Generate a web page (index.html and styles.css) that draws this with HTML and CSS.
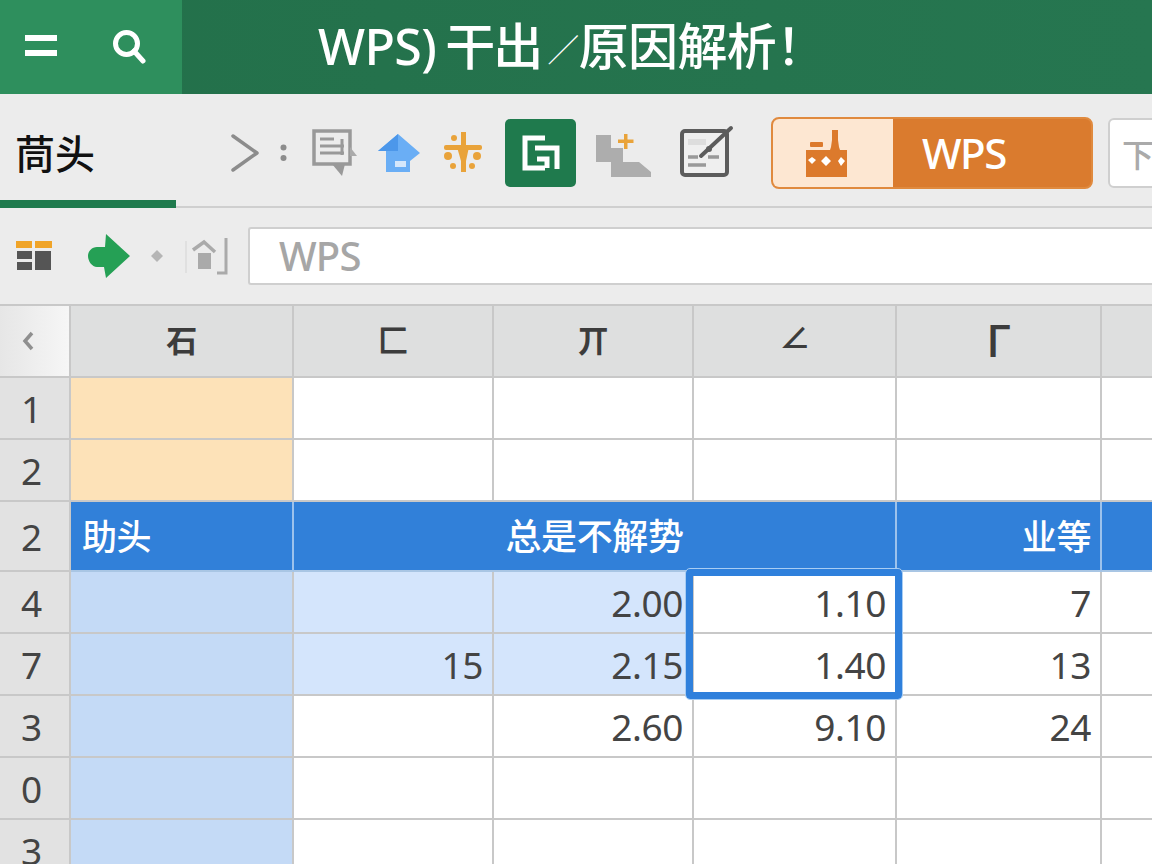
FILE: index.html
```html
<!DOCTYPE html>
<html lang="zh">
<head>
<meta charset="utf-8">
<title>WPS</title>
<link rel="stylesheet" href="styles.css">
</head>
<body>
<div class="app">
  <header class="topbar">
    <div class="topbar-left">
      <svg class="ic-menu" width="32" height="22" viewBox="0 0 32 22"><path d="M0 0h32v6H0zM0 15h32v6H0z" fill="#fff"/></svg>
      <svg class="ic-search" width="36" height="36" viewBox="0 0 36 36"><circle cx="15.5" cy="15.5" r="11" fill="none" stroke="#fff" stroke-width="5"/><path d="M23 23l9 10" stroke="#fff" stroke-width="5" stroke-linecap="round"/></svg>
    </div>
    <h1 class="title">WPS)<span class="t-cjk">干出</span><span class="slash">／</span>原因解析！</h1>
  </header>

  <section class="ribbon">
    <div class="tab">茼头</div>
    <div class="tools">
      <svg class="t-chev" width="28" height="38" viewBox="0 0 28 38"><path d="M2 2l24 17L2 36" fill="none" stroke="#8c8c8c" stroke-width="3.5" stroke-linecap="round" stroke-linejoin="round"/></svg>
      <svg class="t-colon" width="7" height="18" viewBox="0 0 7 18"><circle cx="3.5" cy="3.5" r="3" fill="#8c8c8c"/><circle cx="3.5" cy="14" r="3" fill="#8c8c8c"/></svg>
      <svg class="t-chat" width="46" height="48" viewBox="0 0 46 48"><path d="M2 2h36v33H2z" fill="none" stroke="#999" stroke-width="3.5"/><path d="M8 10h14M8 17h24M8 24h24" stroke="#999" stroke-width="3"/><path d="M30 10v16" stroke="#999" stroke-width="3"/><path d="M38 18l7 9h-7z" fill="#aaa"/><path d="M20 35h13l-3 12z" fill="#999"/></svg>
      <svg class="t-house" width="42" height="38" viewBox="0 0 42 38"><path d="M20 0L0 17h8v21h24V27l10-8z" fill="#6aaef5"/><path d="M20 0v17H0z" fill="#4c97ea"/><rect x="17" y="27" width="11" height="6" fill="#d5e7fb"/></svg>
      <svg class="t-tree" width="38" height="42" viewBox="0 0 38 42"><g fill="#e9a33a"><rect x="17" y="0" width="5" height="40"/><rect x="0" y="13" width="38" height="5" rx="2"/><path d="M13 15h12l-3 14h-5z"/><circle cx="10" cy="6" r="3"/><circle cx="4" cy="24" r="4"/><circle cx="33" cy="24" r="4"/><circle cx="9" cy="34" r="3"/><circle cx="28" cy="34" r="3"/></g></svg>
      <div class="t-active">
        <svg width="71" height="68" viewBox="0 0 71 68"><path d="M40 19H20V49H40M30 29H52V50M32 40H42V49" fill="none" stroke="#fff" stroke-width="5"/></svg>
      </div>
      <svg class="t-stair" width="56" height="47" viewBox="0 0 56 47"><path d="M0 5H15V18H27V32H43L55 42V47H15V32H0Z" fill="#adadad"/><path d="M22 9.500h6V4h3.500v5.500h6V13h-6v6H28v-6h-6z" fill="#e9a33a"/></svg>
      <svg class="t-edit" width="54" height="52" viewBox="0 0 54 52"><rect x="2" y="6" width="45" height="44" rx="3" fill="#efefef" stroke="#5c5c5c" stroke-width="4"/><path d="M8 17h18" stroke="#ddd" stroke-width="6"/><path d="M8 32h10M28 32h11M8 40h18" stroke="#999" stroke-width="3.500"/><path d="M21 31L51 3" stroke="#5c5c5c" stroke-width="4" stroke-linecap="round"/><circle cx="29" cy="24" r="3" fill="#5c5c5c"/></svg>
      <div class="pill">
        <div class="pill-icon">
          <svg width="42" height="47" viewBox="0 0 42 47"><path d="M0 20h24l1-3 1-7V0h6v10l1 7 1 3h7v27H0z" fill="#dc7a2c"/><rect x="4" y="12" width="13" height="5" rx="1" fill="#dc7a2c"/><path d="M2 30l4-3 4 3-4 4zM15 31l5-5 5 5-5 5zM32 31l3-4 4 4-4 5z" fill="#fff"/></svg>
        </div>
        <div class="pill-label">WPS</div>
      </div>
      <div class="box-next">下</div>
    </div>
  </section>

  <section class="formula">
    <svg class="f-table" width="36" height="30" viewBox="0 0 36 30"><path d="M0 0h16v7H0zM19 0h17v7H19z" fill="#f0a428"/><path d="M1 10h15v8H1zM1 21h15v8H1zM19 10h16v19H19z" fill="#555"/></svg>
    <svg class="f-arrow" width="42" height="44" viewBox="0 0 42 44"><path d="M18 0l24 22-24 22-2-11H9C4 33 0 27 0 22s4-9 9-9h8z" fill="#25a055"/></svg>
    <svg class="f-dot" width="12" height="12" viewBox="0 0 12 12"><path d="M6 0l6 6-6 6-6-6z" fill="#b5b5b5"/></svg>
    <svg class="f-home" width="44" height="38" viewBox="0 0 44 38"><path d="M1 4v32" stroke="#ddd" stroke-width="1.500"/><path d="M8 13l11-8 11 10" fill="none" stroke="#aaa" stroke-width="3.500"/><rect x="13" y="16" width="13" height="16" fill="#aaa"/><path d="M41 1v35h-9" fill="none" stroke="#aaa" stroke-width="3"/></svg>
    <div class="input">WPS</div>
  </section>

  <section class="sheet">
    <div class="cell corner"><svg width="12" height="20" viewBox="0 0 12 20"><path d="M10 2L3 10l7 8" fill="none" stroke="#8f8f8f" stroke-width="3.500"/></svg></div>
    <div class="cell colhead">石</div>
    <div class="cell colhead">匚</div>
    <div class="cell colhead">丌</div>
    <div class="cell colhead up">∠</div>
    <div class="cell colhead wide">Γ</div>
    <div class="cell colhead"></div>

    <div class="cell rowhead">1</div><div class="cell peach"></div><div class="cell"></div><div class="cell"></div><div class="cell"></div><div class="cell"></div><div class="cell"></div>
    <div class="cell rowhead">2</div><div class="cell peach"></div><div class="cell"></div><div class="cell"></div><div class="cell"></div><div class="cell"></div><div class="cell"></div>

    <div class="cell rowhead">2</div>
    <div class="cell band left">助头</div>
    <div class="cell band center span3">总是不解势</div>
    <div class="cell band right">业等</div>
    <div class="cell band"></div>

    <div class="cell rowhead">4</div><div class="cell blue"></div><div class="cell pale"></div><div class="cell pale num">2.00</div><div class="cell num">1.10</div><div class="cell num">7</div><div class="cell"></div>
    <div class="cell rowhead">7</div><div class="cell blue"></div><div class="cell pale num">15</div><div class="cell pale num">2.15</div><div class="cell num">1.40</div><div class="cell num">13</div><div class="cell"></div>
    <div class="cell rowhead">3</div><div class="cell blue"></div><div class="cell"></div><div class="cell num">2.60</div><div class="cell num">9.10</div><div class="cell num">24</div><div class="cell"></div>
    <div class="cell rowhead">0</div><div class="cell blue"></div><div class="cell"></div><div class="cell"></div><div class="cell"></div><div class="cell"></div><div class="cell"></div>
    <div class="cell rowhead">3</div><div class="cell blue"></div><div class="cell"></div><div class="cell"></div><div class="cell"></div><div class="cell"></div><div class="cell"></div>

    <div class="selection"></div>
  </section>
</div>
</body>
</html>
```

FILE: styles.css
```css
* { box-sizing: border-box; }
html, body { margin: 0; padding: 0; }
body {
  width: 1152px;
  height: 864px;
  overflow: hidden;
  background: #ececec;
  font-family: "Noto Sans", "Noto Sans CJK SC", sans-serif;
}
.app { width: 1152px; height: 864px; overflow: hidden; display: flex; flex-direction: column; }
svg { display: block; flex: none; }

/* top bar */
.topbar { height: 94px; flex: none; display: flex; background: linear-gradient(90deg, #23704a, #267650); }
.topbar-left {
  width: 182px; flex: none; display: flex; align-items: center;
  padding-left: 25px; background: #2e8f5d;
}
.ic-menu { margin-right: 54px; margin-top: -2px; }
.ic-search { margin-top: -2px; }
.title {
  margin: 0 0 0 136px; font-size: 50px; font-weight: 500; color: #fff;
  line-height: 92px; white-space: nowrap;
  font-family: "Noto Sans", "Noto Sans CJK SC", sans-serif;
  letter-spacing: -0.6px;
}
.t-cjk { margin-left: 9px; letter-spacing: -2px; }
.slash { font-size: 32px; font-weight: 300; margin-left: 6px; margin-right: 0; vertical-align: 3px; }

/* ribbon */
.ribbon {
  height: 114px; flex: none; display: flex; align-items: stretch;
  border-bottom: 2px solid #cfcfcf;
}
.tab {
  width: 176px; flex: none; padding: 31px 0 0 15px;
  font-size: 40px; font-weight: 500; line-height: 54px; color: #111;
  border-bottom: 8px solid #1f7a4d; margin-bottom: -2px;
  font-family: "Noto Sans CJK SC", sans-serif;
}
.tools { flex: 1; display: flex; align-items: center; padding: 6px 0 0 55px; min-width: 0; }
.t-colon { margin-left: 21px; }
.t-chat { margin-left: 25px; }
.t-house { margin-left: 20px; }
.t-tree { margin-left: 24px; }
.t-active {
  width: 71px; height: 68px; margin-left: 23px; flex: none; border-radius: 5px;
  background: #1f7a4d;
}
.t-stair { margin-left: 20px; }
.t-edit { margin-left: 28px; margin-top: -4px; }
.pill {
  width: 322px; height: 72px; margin-left: 37px; flex: none; display: flex;
  border: 2px solid #e08a3e; border-radius: 8px; background: #da7b2e; overflow: hidden;
}
.pill-icon {
  width: 120px; flex: none; background: #fde7d2;
  display: flex; align-items: center; justify-content: center; padding-right: 12px;
}
.pill-label { padding-left: 29px; font-size: 42px; font-weight: 500; line-height: 68px; color: #fff; letter-spacing: -1.500px; }
.box-next {
  width: 60px; height: 70px; margin-left: 15px; flex: none;
  background: #fff; border: 2px solid #cfcfcf; border-radius: 6px;
  color: #aaa; font-size: 32px; font-weight: 500; line-height: 66px; padding-left: 12px;
  font-family: "Noto Sans CJK SC", sans-serif;
}

/* formula row */
.formula {
  height: 98px; flex: none; display: flex; align-items: center;
  padding: 0 0 0 16px; border-bottom: 2px solid #c8c8c8;
}
.f-arrow { margin-left: 36px; }
.f-dot { margin-left: 21px; }
.f-home { margin-left: 22px; }
.input {
  width: 920px; height: 58px; margin-left: 19px; flex: none;
  background: #fff; border: 2px solid #cfcfcf; border-right: 0; border-radius: 3px 0 0 3px;
  color: #a6a6a6; font-size: 40px; font-weight: 500; line-height: 54px; padding-left: 29px;
  letter-spacing: -0.800px;
}

/* sheet */
.sheet {
  position: relative; flex: none; display: grid; background: #fff;
  grid-template-columns: 71px 223px 200px 200px 203px 205px 60px;
  grid-template-rows: 72px 62px 62px 70px 62px 62px 62px 62px 62px;
}
.cell {
  border-right: 2px solid #c8c8c8; border-bottom: 2px solid #c8c8c8;
  color: #444; font-size: 37px; min-width: 0;
  display: flex; align-items: center; letter-spacing: -0.400px;
}
.corner { background: linear-gradient(90deg, #e6e6e6, #f6f6f6); justify-content: center; padding-right: 14px; }
.colhead {
  background: #dedfdf; justify-content: center; font-size: 31px; font-weight: 700;
  color: #3c3c3c; font-family: "Noto Sans CJK SC", sans-serif; padding-bottom: 6px;
}
.colhead.up { padding-bottom: 14px; }
.colhead.wide { font-size: 44px; font-weight: 500; }
.rowhead { background: #e2e2e2; justify-content: center; padding-right: 6px; }
.peach { background: #fde2b8; }
.band {
  background: #3180d9; color: #fff; font-size: 35px; font-weight: 500;
  border-right-color: #9cc2ec; border-bottom-color: #a9c6e4;
  font-family: "Noto Sans CJK SC", sans-serif; padding-bottom: 4px;
}
.left { padding-left: 11px; }
.center { justify-content: center; font-size: 36px; }
.right { justify-content: flex-end; padding-right: 9px; }
.span3 { grid-column: span 3; }
.blue { background: #c4daf6; }
.pale { background: #d4e5fc; }
.num { justify-content: flex-end; padding-right: 9px; }
.selection {
  position: absolute; left: 686px; top: 263px; width: 216px; height: 130px;
  border: 7px solid #2f80dc; border-radius: 4px;
  outline: 1px solid #a8cdf3; pointer-events: none;
}
```
